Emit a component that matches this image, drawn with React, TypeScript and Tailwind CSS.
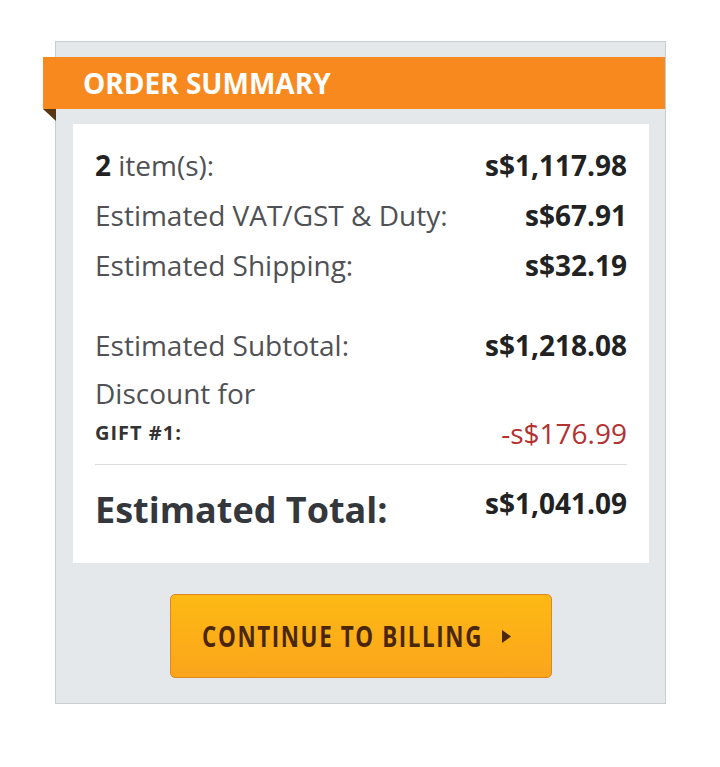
import React from "react";

function Row({ label, value, className = "" }: { label: React.ReactNode; value: string; className?: string }) {
  return (
    <div className={`flex items-center justify-between h-[50px] ${className}`}>
      <span className="text-[#4f5155]">{label}</span>
      <span className="font-bold text-[#222]">{value}</span>
    </div>
  );
}

export default function App() {
  return (
    <div className="min-h-[767px] bg-white pt-[41px] pl-[55px]" style={{ fontFamily: '"Open Sans", "Noto Sans", sans-serif' }}>
      <div className="w-[611px] h-[663px] border border-[#c9ccd0] bg-[#e5e8eb] pt-[15px] flex flex-col">
        <div className="relative -ml-[13px] h-[52px] bg-[#f7891f] flex items-center pl-[40px]">
          <span className="text-white font-bold text-[28px] leading-none">ORDER SUMMARY</span>
          <div className="absolute left-0 top-full w-0 h-0 border-t-[12px] border-t-[#5a3512] border-l-[13px] border-l-transparent" />
        </div>
        <div className="mt-[15px] ml-[17px] mr-[16px] h-[439px] bg-white px-[22px] pt-[16px] text-[28px]">
          <Row label={<><span className="font-bold text-[#222]">2</span> item(s):</>} value="s$1,117.98" />
          <Row label="Estimated VAT/GST & Duty:" value="s$67.91" />
          <Row label="Estimated Shipping:" value="s$32.19" />
          <Row label="Estimated Subtotal:" value="s$1,218.08" className="mt-[30px]" />
          <div className="leading-[46px] text-[#4f5155]">Discount for</div>
          <div className="flex items-center justify-between h-[34px]">
            <span className="font-bold text-[20px] tracking-[1px] text-[#333]">GIFT #1:</span>
            <span className="text-[#b3312f]">-s$176.99</span>
          </div>
          <div className="mt-[14px] h-px bg-[#dcdcdc]" />
          <div className="flex justify-between items-start pt-[20px]">
            <span className="font-bold text-[36px] leading-[50px] text-[#34373b]">Estimated Total:</span>
            <span className="font-bold text-[#222] leading-[36px]">s$1,041.09</span>
          </div>
        </div>
        <div className="mt-[31px] flex justify-center">
          <button className="w-[382px] h-[84px] rounded-[5px] border border-[#e0861c] bg-gradient-to-b from-[#fdb913] to-[#fba51b] flex items-center justify-center gap-[18px] pr-[8px] text-[#4a270c]">
            <span className="font-bold text-[28px] tracking-[2px] inline-block scale-x-[0.8] -mx-[35px] whitespace-nowrap">CONTINUE TO BILLING</span>
            <svg width="9" height="13" viewBox="0 0 9 13"><path d="M0 0 L9 6.5 L0 13 Z" fill="#4a270c" /></svg>
          </button>
        </div>
      </div>
    </div>
  );
}
